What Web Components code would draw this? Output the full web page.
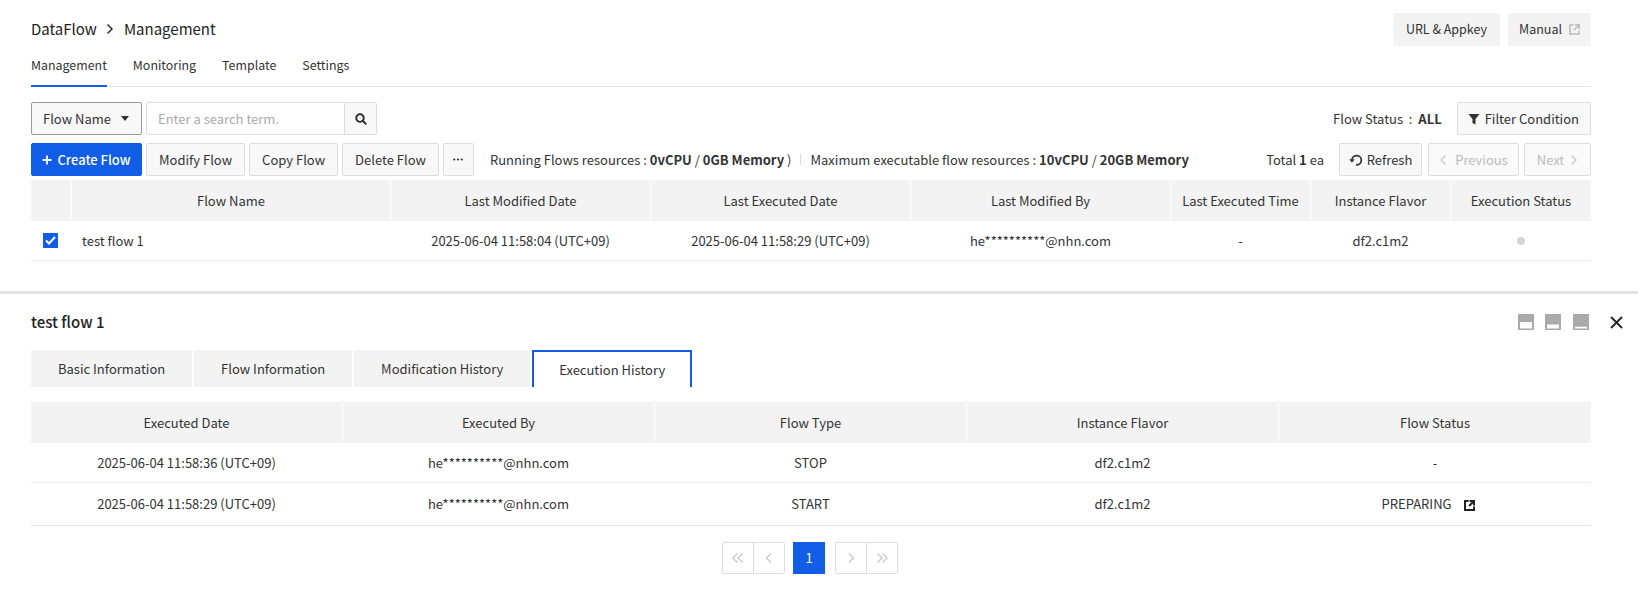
<!DOCTYPE html>
<html lang="en">
<head>
<meta charset="utf-8">
<title>DataFlow Management</title>
<style>
  html, body { margin: 0; background: #fff; }
  body { font: 13px/20px "Noto Sans CJK KR", "Noto Sans", sans-serif; color: #333; }
  svg { display: block; flex: none; }
  b { font-weight: 700; }
  .ico-grey { color: #bbb; }
</style>
</head>
<body>

<df-page>
  <df-section slot="top">
    <df-header>
      <span slot="first">DataFlow</span>
      <span slot="second">Management</span>
      <df-button slot="actions" flat>URL &amp; Appkey</df-button>
      <df-button slot="actions" flat style="gap:7px;padding:0 10px">Manual
        <svg slot="after" class="ico-grey" width="11" height="11" viewBox="0 0 11 11" fill="none" stroke="currentColor" stroke-width="1.5"><path d="M4.5 1H1v9h9V6.5"/><path d="M6 .8h4.2V5M10 1 5 6"/></svg>
      </df-button>
    </df-header>

    <df-nav>
      <a class="on">Management</a><a>Monitoring</a><a>Template</a><a>Settings</a>
    </df-nav>

    <df-toolbar>
      <df-select>Flow Name</df-select>
      <df-search placeholder="Enter a search term."></df-search>
      <span slot="end">Flow Status &nbsp;:&nbsp; <b>ALL</b></span>
      <df-button slot="end" style="margin-left:11px;padding:0 11px 0 10px;gap:5px">
        <svg slot="before" width="12" height="12" viewBox="0 0 12 12" fill="#333"><path d="M.5 1h11L7.5 6v5.5l-3-1.5V6z"/></svg>
        Filter Condition
      </df-button>
    </df-toolbar>

    <df-toolbar tight>
      <df-button primary style="gap:5px">
        <svg slot="before" width="10" height="10" viewBox="0 0 10 10" stroke="#fff" stroke-width="1.8"><path d="M5 .5v9M.5 5h9"/></svg>
        Create Flow
      </df-button>
      <df-button>Modify Flow</df-button>
      <df-button>Copy Flow</df-button>
      <df-button>Delete Flow</df-button>
      <df-button narrow>
        <svg width="10" height="3" viewBox="0 0 10 3" fill="#333"><circle cx="1.3" cy="1.5" r="1.1"/><circle cx="5" cy="1.5" r="1.1"/><circle cx="8.7" cy="1.5" r="1.1"/></svg>
      </df-button>
      <df-resources>
        <span slot="running">Running Flows resources : <b>0vCPU</b> / <b>0GB Memory</b> )</span>
        <span slot="max">Maximum executable flow resources : <b>10vCPU</b> / <b>20GB Memory</b></span>
      </df-resources>
      <span slot="end" style="margin-right:11px">Total <b>1</b> ea</span>
      <df-button slot="end" compact style="width:83px;gap:4px">
        <svg slot="before" width="14" height="14" viewBox="0 0 14 14" fill="none" stroke="#333" stroke-width="1.8"><path d="M3 6.5A4.7 4.7 0 1 1 7 11.9"/><path d="M.2 6.3h5.6L3 9.8z" fill="#333" stroke="none"/></svg>
        Refresh
      </df-button>
      <df-button slot="end" compact disabled style="width:91px;margin-left:2px;gap:8px">
        <svg slot="before" width="8" height="12" viewBox="0 0 8 12" fill="none" stroke="#ccc" stroke-width="1.5"><path d="M6.5 1.5 2 6l4.5 4.5"/></svg>
        Previous
      </df-button>
      <df-button slot="end" compact disabled style="width:67px;margin-left:1px">Next
        <svg slot="after" width="8" height="12" viewBox="0 0 8 12" fill="none" stroke="#ccc" stroke-width="1.5"><path d="M1.5 1.5 6 6l-4.5 4.5"/></svg>
      </df-button>
    </df-toolbar>

    <df-table cols="41px 319px 260px 260px 260px 140px 140px 140px">
      <df-row head>
        <df-cell></df-cell><df-cell>Flow Name</df-cell><df-cell>Last Modified Date</df-cell><df-cell>Last Executed Date</df-cell>
        <df-cell>Last Modified By</df-cell><df-cell>Last Executed Time</df-cell><df-cell>Instance Flavor</df-cell><df-cell>Execution Status</df-cell>
      </df-row>
      <df-row>
        <df-cell style="padding-right:2px"><df-check></df-check></df-cell><df-cell left>test flow 1</df-cell><df-cell>2025-06-04 11:58:04 (UTC+09)</df-cell><df-cell>2025-06-04 11:58:29 (UTC+09)</df-cell>
        <df-cell>he**********@nhn.com</df-cell><df-cell>-</df-cell><df-cell>df2.c1m2</df-cell><df-cell><df-dot></df-dot></df-cell>
      </df-row>
    </df-table>
  </df-section>

  <df-section slot="bottom">
    <df-detail-title>
      test flow 1
      <svg slot="icons" width="16" height="16" viewBox="0 0 16 16"><rect width="16" height="16" fill="#aaa"/><rect x="2" y="8" width="12" height="6.5" fill="#fff"/></svg>
      <svg slot="icons" width="16" height="16" viewBox="0 0 16 16"><rect width="16" height="16" fill="#aaa"/><rect x="2" y="10.5" width="12" height="4" fill="#fff"/></svg>
      <svg slot="icons" width="16" height="16" viewBox="0 0 16 16"><rect width="16" height="16" fill="#aaa"/><rect x="2" y="12.7" width="12" height="1.8" fill="#fff"/></svg>
      <svg slot="close" width="13" height="13" viewBox="0 0 13 13" stroke="#222" stroke-width="1.8"><path d="M1 1l11 11M12 1 1 12"/></svg>
    </df-detail-title>

    <df-tabs>
      <a>Basic Information</a><a>Flow Information</a><a>Modification History</a><a class="on">Execution History</a>
    </df-tabs>

    <df-table cols="repeat(5, 1fr)" closed>
      <df-row head>
        <df-cell>Executed Date</df-cell><df-cell>Executed By</df-cell><df-cell>Flow Type</df-cell><df-cell>Instance Flavor</df-cell><df-cell>Flow Status</df-cell>
      </df-row>
      <df-row>
        <df-cell>2025-06-04 11:58:36 (UTC+09)</df-cell><df-cell>he**********@nhn.com</df-cell><df-cell>STOP</df-cell><df-cell>df2.c1m2</df-cell><df-cell>-</df-cell>
      </df-row>
      <df-row tall>
        <df-cell>2025-06-04 11:58:29 (UTC+09)</df-cell><df-cell>he**********@nhn.com</df-cell><df-cell>START</df-cell><df-cell>df2.c1m2</df-cell>
        <df-cell>PREPARING
          <svg style="margin:2px 13px 0 13px" width="11" height="11" viewBox="0 0 11 11" fill="none" stroke="#222" stroke-width="2"><path d="M4.5 1H1v9h9V6.5"/><path d="M5.5 1H10v4.5M10 1 5 6"/></svg>
        </df-cell>
      </df-row>
    </df-table>

    <df-pager></df-pager>
  </df-section>
</df-page>

<script>
function define(name, css, html) {
  customElements.define(name, class extends HTMLElement {
    constructor() {
      super();
      this.attachShadow({mode: 'open'});
      this.shadowRoot.innerHTML = `<style>${css}</style>${html}`;
    }
  });
}

define('df-page', `
  :host { display: flex; flex-direction: column; min-height: 616px; }
  .top { padding: 13px 47px 30px 31px; border-bottom: 3px solid #e4e4e4; }
  .bottom { padding: 0 47px 0 31px; }
`, `<div class="top"><slot name="top"></slot></div><div class="bottom"><slot name="bottom"></slot></div>`);

define('df-section', `:host { display: block; }`, `<slot></slot>`);

define('df-header', `
  :host { display: flex; align-items: center; justify-content: space-between; height: 32px; }
  .crumb { display: flex; align-items: center; font-size: 15px; color: #222; }
  svg { margin: 0 10px 0 9px; }
  .actions { display: flex; gap: 8px; }
`, `<div class="crumb"><slot name="first"></slot>
    <svg width="8" height="12" viewBox="0 0 8 12" fill="none" stroke="#333" stroke-width="1.5"><path d="M1.5 1.5 6 6l-4.5 4.5"/></svg>
    <slot name="second"></slot></div>
  <div class="actions"><slot name="actions"></slot></div>`);

define('df-nav', `
  :host { display: flex; gap: 26px; height: 41px; border-bottom: 1px solid #e6e6e6; margin-bottom: 15px; }
  ::slotted(a) { display: block; padding-top: 10px; height: 30px; font-size: 12.4px; color: #333; }
  ::slotted(a.on) { border-bottom: 2px solid #125de6; }
`, `<slot></slot>`);

define('df-toolbar', `
  :host { display: flex; justify-content: space-between; align-items: center; height: 33px; margin-bottom: 8px; }
  :host([tight]) { margin-bottom: 4px; }
  .side { display: flex; align-items: center; gap: 4px; }
`, `<div class="side"><slot></slot></div><div class="side"><slot name="end"></slot></div>`);

define('df-button', `
  :host { display: inline-flex; align-items: center; justify-content: center; gap: 6px; box-sizing: border-box; height: 33px; padding: 0 12px;
    background: #f8f8f8; border: 1px solid #ddd; border-radius: 2px; color: #333; white-space: nowrap; }
  :host([primary]) { background: #125de6; border-color: #125de6; color: #fff; font-weight: 500; width: 111px; padding: 0; }
  :host([flat]) { background: #f3f3f3; border-color: #f3f3f3; font-size: 12.5px; }
  :host([narrow]) { width: 31px; padding: 0; }
  :host([compact]) { padding: 0; }
  :host([disabled]) { color: #bbb; background: #fafafa; }
`, `<slot name="before"></slot><slot></slot><slot name="after"></slot>`);

define('df-select', `
  :host { display: inline-flex; align-items: center; justify-content: space-between; box-sizing: border-box; width: 111px; height: 33px; padding: 0 12px 0 11px;
    border: 1px solid #999; border-radius: 2px; background: #f8f8f8; }
`, `<slot></slot><svg width="8" height="5" viewBox="0 0 8 5" fill="#333"><path d="M0 0h8L4 5z"/></svg>`);

customElements.define('df-search', class extends HTMLElement {
  constructor() {
    super();
    this.attachShadow({mode: 'open'});
    this.shadowRoot.innerHTML = `<style>
      :host { display: flex; box-sizing: border-box; width: 231px; height: 33px; border: 1px solid #ddd; border-radius: 2px; }
      .text { flex: 1; padding-left: 11px; line-height: 32px; color: #aaa; font-size: 13px; }
      .btn { width: 31px; background: #f8f8f8; border-left: 1px solid #ddd; display: flex; align-items: center; justify-content: center; }
      svg { display: block; }
    </style>
    <div class="text">${this.getAttribute('placeholder')}</div>
    <div class="btn"><svg width="12" height="12" viewBox="0 0 12 12" fill="none" stroke="#222" stroke-width="1.8"><circle cx="5" cy="5" r="3.8"/><path d="m8 8 3.3 3.3"/></svg></div>`;
  }
});

define('df-resources', `
  :host { display: inline-flex; align-items: center; margin-left: 12px; }
  i { display: block; width: 1px; height: 11px; background: #ddd; margin: 0 9px; }
`, `<slot name="running"></slot><i></i><slot name="max"></slot>`);

customElements.define('df-table', class extends HTMLElement {
  constructor() {
    super();
    this.attachShadow({mode: 'open'});
    this.shadowRoot.innerHTML = `<style>
      :host { display: block; --cols: ${this.getAttribute('cols')}; }
      :host([closed]) { border-bottom: 1px solid #e4e4e4; }
    </style><slot></slot>`;
  }
});

define('df-row', `
  :host { display: grid; grid-template-columns: var(--cols); height: 40px; border-bottom: 1px solid #eee; box-sizing: border-box; }
  :host([head]) { background: #f3f3f3; border-bottom: 0; height: 41px; }
  :host([tall]) { height: 42px; border-bottom: 0; }
`, `<slot></slot>`);

define('df-cell', `
  :host { display: flex; align-items: center; justify-content: center; min-width: 0; border-right: 1px solid #fff; }
  :host(:last-child) { border-right: 0; }
  :host([left]) { justify-content: flex-start; padding-left: 10px; }
`, `<slot></slot>`);

define('df-check', `
  :host { display: flex; align-items: center; justify-content: center; width: 15px; height: 15px; background: #125de6; }
  svg { display: block; }
`, `<svg width="11" height="9" viewBox="0 0 11 9" fill="none" stroke="#fff" stroke-width="2"><path d="m1 4.5 3 3L10 1"/></svg>`);

define('df-dot', `:host { display: block; width: 8px; height: 8px; border-radius: 50%; background: #d4d4d4; }`, ``);

define('df-detail-title', `
  :host { display: flex; align-items: center; justify-content: space-between; height: 56px; font-size: 15px; font-weight: 500; color: #222; }
  .tools { display: flex; align-items: center; gap: 11.5px; margin-right: -32px; }
  .close { margin-left: 10px; }
`, `<slot></slot><div class="tools"><slot name="icons"></slot><span class="close"><slot name="close"></slot></span></div>`);

define('df-tabs', `
  :host { display: flex; gap: 1.8px; height: 37px; margin-bottom: 15px; }
  ::slotted(a) { display: flex; align-items: center; padding: 0 27px; background: #f3f3f3; color: #333; }
  ::slotted(a.on) { background: #fff; border: 2px solid #125de6; border-bottom: 0; padding: 0 25px; }
`, `<slot></slot>`);

customElements.define('df-pager', class extends HTMLElement {
  constructor() {
    super();
    const chev = d => `<svg width="14" height="12" viewBox="0 0 14 12" fill="none" stroke="#ccc" stroke-width="1.5"><path d="${d}"/></svg>`;
    this.attachShadow({mode: 'open'});
    this.shadowRoot.innerHTML = `<style>
      :host { display: flex; justify-content: center; align-items: center; margin-top: 16px; padding-right: 2px; }
      svg { display: block; }
      .grp { display: flex; border: 1px solid #ddd; border-radius: 2px; }
      .grp span { width: 30px; height: 30px; display: flex; align-items: center; justify-content: center; }
      .grp span + span { border-left: 1px solid #ddd; }
      .cur { width: 32px; height: 32px; background: #125de6; color: #fff; display: flex; align-items: center; justify-content: center; margin: 0 10px 0 8px; }
    </style>
    <div class="grp"><span>${chev('M6.5 1.5 2 6l4.5 4.5M11.5 1.5 7 6l4.5 4.5')}</span><span>${chev('M9 1.5 4.5 6 9 10.5')}</span></div>
    <div class="cur">1</div>
    <div class="grp"><span>${chev('M5 1.5 9.5 6 5 10.5')}</span><span>${chev('M2.5 1.5 7 6l-4.5 4.5M7.5 1.5 12 6l-4.5 4.5')}</span></div>`;
  }
});
</script>
</body>
</html>
